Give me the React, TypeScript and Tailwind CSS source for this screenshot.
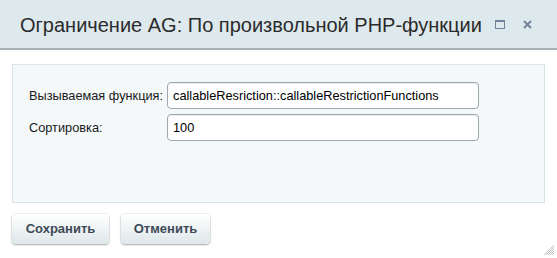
import React from "react";

export default function App() {
  return (
    <div className="relative w-[557px] h-[258px] bg-white overflow-hidden" style={{ fontFamily: '"Liberation Sans", Arial, sans-serif' }}>
      <div className="h-[50px] bg-[#dee9ee] border-b-2 border-[#a9b0b4] flex items-center pl-[20px] pr-[25px]">
        <div className="flex-1 text-[20px] text-[#2b2b2b] pt-[1px]">Ограничение AG: По произвольной PHP-функции</div>
        <div className="flex items-center gap-[18px]">
          <svg width="10" height="9" viewBox="0 0 10 9">
            <rect x="0.5" y="0.5" width="9" height="8" fill="none" stroke="#6f8597" strokeWidth="1" />
            <rect x="0" y="0" width="10" height="2" fill="#6f8597" />
          </svg>
          <svg width="9" height="9" viewBox="0 0 9 9">
            <path d="M1 1 L8 8 M8 1 L1 8" stroke="#6f8597" strokeWidth="2" />
          </svg>
        </div>
      </div>
      <div className="mt-[14px] mx-[12px] w-[533px] h-[139px] border border-[#d7e4ea] bg-[#f4f8f9] pt-[17px] pl-[16px]">
        <div className="flex items-center h-[27px]">
          <div className="w-[138px] text-[12.75px] text-[#1a1a1a]">Вызываемая функция:</div>
          <div className="w-[312px] h-[27px] border border-[#9ea7ad] rounded-[4px] bg-white flex items-center pl-[5px] text-[12.75px] text-black shadow-[inset_0_1px_1px_rgba(0,0,0,0.08)]">callableResriction::callableRestrictionFunctions</div>
        </div>
        <div className="flex items-center h-[27px] mt-[5px]">
          <div className="w-[138px] text-[12.75px] text-[#1a1a1a]">Сортировка:</div>
          <div className="w-[312px] h-[27px] border border-[#9ea7ad] rounded-[4px] bg-white flex items-center pl-[5px] text-[12.75px] text-black shadow-[inset_0_1px_1px_rgba(0,0,0,0.08)]">100</div>
        </div>
      </div>
      <div className="flex gap-[12px] mt-[11px] ml-[12px]">
        <div className="w-[97px] h-[30px] rounded-[4px] bg-gradient-to-b from-[#ffffff] to-[#dde7ea] shadow-[0_1px_2px_rgba(0,0,0,0.3),0_0_0_1px_rgba(0,0,0,0.05)] flex items-center justify-center text-[13px] font-bold text-[#3d4a55]">Сохранить</div>
        <div className="w-[89px] h-[30px] rounded-[4px] bg-gradient-to-b from-[#ffffff] to-[#dde7ea] shadow-[0_1px_2px_rgba(0,0,0,0.3),0_0_0_1px_rgba(0,0,0,0.05)] flex items-center justify-center text-[13px] font-bold text-[#3d4a55]">Отменить</div>
      </div>
      <svg className="absolute right-[2px] bottom-[2px]" width="12" height="12" viewBox="0 0 12 12">
        <path d="M11 3 L3 11 M11 5 L5 11 M11 7 L7 11 M11 9 L9 11 M11 1 L1 11" stroke="#b5b5b5" strokeWidth="0.8" />
      </svg>
    </div>
  );
}
